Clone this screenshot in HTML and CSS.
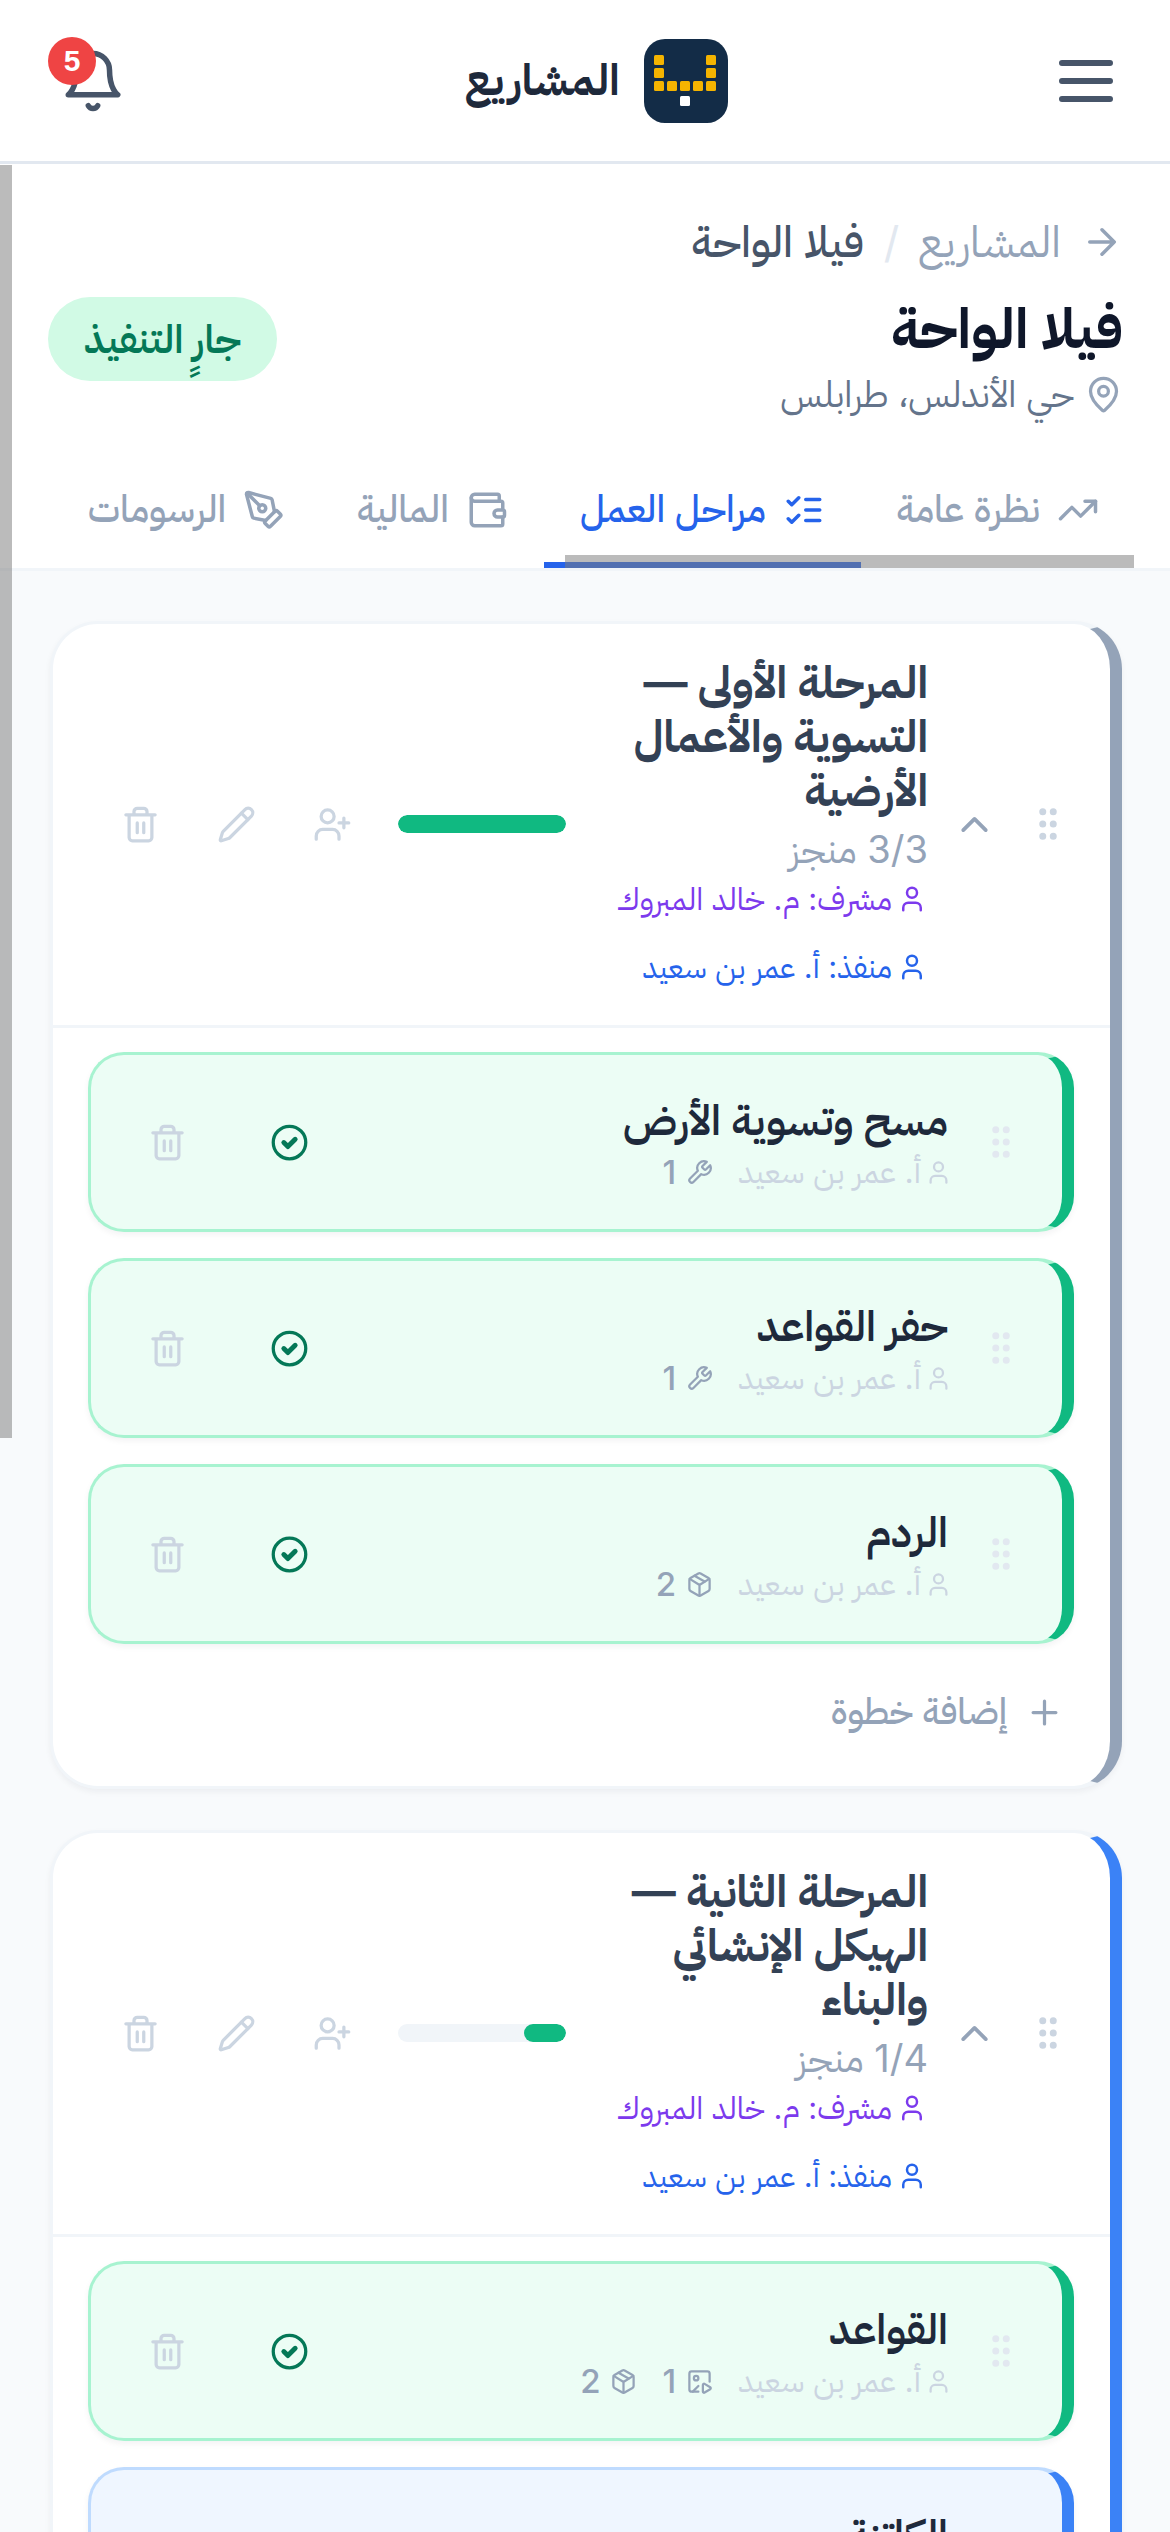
FILE: index.html
```html
<!DOCTYPE html>
<html lang="ar" dir="rtl">
<head>
    <meta charset="UTF-8">
    <title>فيلا الواحة</title>
    <link rel="stylesheet" href="styles.css">
</head>
<body>
<svg class="defs" xmlns="http://www.w3.org/2000/svg">
    <symbol id="i-menu" viewBox="0 0 24 24"><path d="M4 6h16M4 12h16M4 18h16"/></symbol>
    <symbol id="i-bell" viewBox="0 0 24 24"><path d="M6 8a6 6 0 0 1 12 0c0 7 3 9 3 9H3s3-2 3-9"/><path d="M10.3 21a1.94 1.94 0 0 0 3.4 0"/></symbol>
    <symbol id="i-arrow" viewBox="0 0 24 24"><path d="M5 12h14M12 5l7 7-7 7"/></symbol>
    <symbol id="i-pin" viewBox="0 0 24 24"><path d="M20 10c0 4.993-5.539 10.193-7.399 11.799a1 1 0 0 1-1.202 0C9.539 20.193 4 14.993 4 10a8 8 0 0 1 16 0"/><circle cx="12" cy="10" r="3"/></symbol>
    <symbol id="i-trend" viewBox="0 0 24 24"><path d="M22 7l-8.5 8.5-5-5L2 17"/><path d="M16 7h6v6"/></symbol>
    <symbol id="i-checks" viewBox="0 0 24 24"><path d="m3 17 2 2 4-4M3 7l2 2 4-4M13 6h8M13 12h8M13 18h8"/></symbol>
    <symbol id="i-wallet" viewBox="0 0 24 24"><path d="M19 7V4a1 1 0 0 0-1-1H5a2 2 0 0 0 0 4h15a1 1 0 0 1 1 1v4h-3a2 2 0 0 0 0 4h3a1 1 0 0 0 1-1v-2a1 1 0 0 0-1-1"/><path d="M3 5v14a2 2 0 0 0 2 2h15a1 1 0 0 0 1-1v-4"/></symbol>
    <symbol id="i-pen" viewBox="0 0 24 24"><path d="M15.707 21.293a1 1 0 0 1-1.414 0l-1.586-1.586a1 1 0 0 1 0-1.414l5.586-5.586a1 1 0 0 1 1.414 0l1.586 1.586a1 1 0 0 1 0 1.414z"/><path d="m18 13-1.375-6.874a1 1 0 0 0-.746-.776L3.235 2.028a1 1 0 0 0-1.207 1.207L5.35 15.879a1 1 0 0 0 .776.746L13 18"/><path d="m2.3 2.3 7.286 7.286"/><circle cx="11" cy="11" r="2"/></symbol>
    <symbol id="i-grip" viewBox="0 0 24 24"><circle cx="9" cy="5" r="1"/><circle cx="15" cy="5" r="1"/><circle cx="9" cy="12" r="1"/><circle cx="15" cy="12" r="1"/><circle cx="9" cy="19" r="1"/><circle cx="15" cy="19" r="1"/></symbol>
    <symbol id="i-chevron" viewBox="0 0 24 24"><path d="m18 15-6-6-6 6"/></symbol>
    <symbol id="i-userplus" viewBox="0 0 24 24"><path d="M16 21v-2a4 4 0 0 0-4-4H6a4 4 0 0 0-4 4v2"/><circle cx="9" cy="7" r="4"/><path d="M19 8v6M22 11h-6"/></symbol>
    <symbol id="i-pencil" viewBox="0 0 24 24"><path d="M21.174 6.812a1 1 0 0 0-3.986-3.987L3.842 16.174a2 2 0 0 0-.5.83l-1.321 4.352a.5.5 0 0 0 .623.622l4.353-1.32a2 2 0 0 0 .83-.497z"/><path d="m15 5 4 4"/></symbol>
    <symbol id="i-trash" viewBox="0 0 24 24"><path d="M3 6h18M19 6v14c0 1-1 2-2 2H7c-1 0-2-1-2-2V6M8 6V4c0-1 1-2 2-2h4c1 0 2 1 2 2v2M10 11v6M14 11v6"/></symbol>
    <symbol id="i-user" viewBox="0 0 24 24"><path d="M19 21v-2a4 4 0 0 0-4-4H9a4 4 0 0 0-4 4v2"/><circle cx="12" cy="7" r="4"/></symbol>
    <symbol id="i-wrench" viewBox="0 0 24 24"><path d="M14.7 6.3a1 1 0 0 0 0 1.4l1.6 1.6a1 1 0 0 0 1.4 0l3.77-3.77a6 6 0 0 1-7.94 7.94l-6.91 6.91a2.12 2.12 0 0 1-3-3l6.91-6.91a6 6 0 0 1 7.94-7.94l-3.76 3.76z"/></symbol>
    <symbol id="i-package" viewBox="0 0 24 24"><path d="M11 21.73a2 2 0 0 0 2 0l7-4A2 2 0 0 0 21 16V8a2 2 0 0 0-1-1.73l-7-4a2 2 0 0 0-2 0l-7 4A2 2 0 0 0 3 8v8a2 2 0 0 0 1 1.73z"/><path d="M12 22V12"/><path d="m3.3 7 7.703 4.734a2 2 0 0 0 1.994 0L20.7 7"/><path d="m7.5 4.27 9 5.15"/></symbol>
    <symbol id="i-media" viewBox="0 0 24 24"><path d="M15 15.003a1 1 0 0 1 1.517-.859l4.997 2.997a1 1 0 0 1 0 1.718l-4.997 2.997a1 1 0 0 1-1.517-.86z"/><path d="M21 12.17V5a2 2 0 0 0-2-2H5a2 2 0 0 0-2 2v14a2 2 0 0 0 2 2h6"/><path d="m6 21 5-5"/><circle cx="9" cy="9" r="2"/></symbol>
    <symbol id="i-done" viewBox="0 0 24 24"><circle cx="12" cy="12" r="10"/><path class="tick" d="m8.5 12 2.5 2.5 4.5-4.5"/></symbol>
    <symbol id="i-plus" viewBox="0 0 24 24"><path d="M5 12h14M12 5v14"/></symbol>
</svg>

<header class="topbar">
    <button class="icon-btn menu-btn"><svg class="icon"><use href="#i-menu"/></svg></button>
    <div class="brand">
        <svg class="logo" viewBox="0 0 84 84">
            <rect width="84" height="84" rx="21" fill="#132c47"/>
            <g fill="#f5b400">
                <rect x="10" y="16" width="10" height="10" rx="1.5"/><rect x="62" y="16" width="10" height="10" rx="1.5"/>
                <rect x="10" y="29" width="10" height="10" rx="1.5"/><rect x="62" y="29" width="10" height="10" rx="1.5"/>
                <rect x="10" y="42" width="10" height="10" rx="1.5"/><rect x="23" y="42" width="10" height="10" rx="1.5"/>
                <rect x="36" y="42" width="10" height="10" rx="1.5"/><rect x="49" y="42" width="10" height="10" rx="1.5"/>
                <rect x="62" y="42" width="10" height="10" rx="1.5"/>
            </g>
            <rect x="36" y="57" width="10" height="10" rx="1.5" fill="#fff"/>
        </svg>
        <span class="brand-name">المشاريع</span>
    </div>
    <button class="icon-btn bell-btn"><svg class="icon"><use href="#i-bell"/></svg><span class="badge">5</span></button>
</header>

<section class="project-head">
    <div class="crumbs">
        <svg class="icon crumb-arrow"><use href="#i-arrow"/></svg>
        <span class="crumb-link">المشاريع</span>
        <span class="crumb-sep">/</span>
        <span class="crumb-current">فيلا الواحة</span>
    </div>
    <div class="title-row">
        <div>
            <h1>فيلا الواحة</h1>
            <p class="location"><svg class="icon pin"><use href="#i-pin"/></svg>حي الأندلس، طرابلس</p>
        </div>
        <span class="status">جارٍ التنفيذ</span>
    </div>
    <nav class="tabs">
        <a class="tab"><svg class="icon"><use href="#i-trend"/></svg>نظرة عامة</a>
        <a class="tab active"><svg class="icon"><use href="#i-checks"/></svg>مراحل العمل</a>
        <a class="tab"><svg class="icon"><use href="#i-wallet"/></svg>المالية</a>
        <a class="tab"><svg class="icon"><use href="#i-pen"/></svg>الرسومات</a>
        <div class="scroll-x"></div>
    </nav>
</section>

<main class="phases">
    <div class="scroll-y"></div>

    <article class="phase phase-done">
        <div class="phase-head">
            <svg class="icon grip"><use href="#i-grip"/></svg>
            <svg class="icon chevron"><use href="#i-chevron"/></svg>
            <div class="phase-info">
                <h2>المرحلة الأولى — التسوية والأعمال الأرضية</h2>
                <p class="count">3/3 منجز</p>
                <p class="role role-super"><svg class="icon"><use href="#i-user"/></svg>مشرف: م. خالد المبروك</p>
                <p class="role role-exec"><svg class="icon"><use href="#i-user"/></svg>منفذ: أ. عمر بن سعيد</p>
            </div>
            <div class="bar"><div class="bar-fill" style="width:100%"></div></div>
            <div class="actions">
                <svg class="icon"><use href="#i-userplus"/></svg>
                <svg class="icon"><use href="#i-pencil"/></svg>
                <svg class="icon"><use href="#i-trash"/></svg>
            </div>
        </div>
        <div class="steps">
            <div class="step step-done">
                <svg class="icon grip"><use href="#i-grip"/></svg>
                <div class="step-info">
                    <h3>مسح وتسوية الأرض</h3>
                    <div class="step-meta">
                        <span class="person"><svg class="icon"><use href="#i-user"/></svg>أ. عمر بن سعيد</span>
                        <span class="attach"><svg class="icon"><use href="#i-wrench"/></svg>1</span>
                    </div>
                </div>
                <svg class="icon done"><use href="#i-done"/></svg>
                <svg class="icon step-trash"><use href="#i-trash"/></svg>
            </div>
            <div class="step step-done">
                <svg class="icon grip"><use href="#i-grip"/></svg>
                <div class="step-info">
                    <h3>حفر القواعد</h3>
                    <div class="step-meta">
                        <span class="person"><svg class="icon"><use href="#i-user"/></svg>أ. عمر بن سعيد</span>
                        <span class="attach"><svg class="icon"><use href="#i-wrench"/></svg>1</span>
                    </div>
                </div>
                <svg class="icon done"><use href="#i-done"/></svg>
                <svg class="icon step-trash"><use href="#i-trash"/></svg>
            </div>
            <div class="step step-done">
                <svg class="icon grip"><use href="#i-grip"/></svg>
                <div class="step-info">
                    <h3>الردم</h3>
                    <div class="step-meta">
                        <span class="person"><svg class="icon"><use href="#i-user"/></svg>أ. عمر بن سعيد</span>
                        <span class="attach"><svg class="icon"><use href="#i-package"/></svg>2</span>
                    </div>
                </div>
                <svg class="icon done"><use href="#i-done"/></svg>
                <svg class="icon step-trash"><use href="#i-trash"/></svg>
            </div>
            <a class="add-step"><svg class="icon"><use href="#i-plus"/></svg>إضافة خطوة</a>
        </div>
    </article>

    <article class="phase phase-active">
        <div class="phase-head">
            <svg class="icon grip"><use href="#i-grip"/></svg>
            <svg class="icon chevron"><use href="#i-chevron"/></svg>
            <div class="phase-info">
                <h2>المرحلة الثانية — الهيكل الإنشائي والبناء</h2>
                <p class="count">1/4 منجز</p>
                <p class="role role-super"><svg class="icon"><use href="#i-user"/></svg>مشرف: م. خالد المبروك</p>
                <p class="role role-exec"><svg class="icon"><use href="#i-user"/></svg>منفذ: أ. عمر بن سعيد</p>
            </div>
            <div class="bar"><div class="bar-fill" style="width:25%"></div></div>
            <div class="actions">
                <svg class="icon"><use href="#i-userplus"/></svg>
                <svg class="icon"><use href="#i-pencil"/></svg>
                <svg class="icon"><use href="#i-trash"/></svg>
            </div>
        </div>
        <div class="steps">
            <div class="step step-done">
                <svg class="icon grip"><use href="#i-grip"/></svg>
                <div class="step-info">
                    <h3>القواعد</h3>
                    <div class="step-meta">
                        <span class="person"><svg class="icon"><use href="#i-user"/></svg>أ. عمر بن سعيد</span>
                        <span class="attach"><svg class="icon"><use href="#i-media"/></svg>1</span>
                        <span class="attach"><svg class="icon"><use href="#i-package"/></svg>2</span>
                    </div>
                </div>
                <svg class="icon done"><use href="#i-done"/></svg>
                <svg class="icon step-trash"><use href="#i-trash"/></svg>
            </div>
            <div class="step step-active">
                <svg class="icon grip"><use href="#i-grip"/></svg>
                <div class="step-info">
                    <h3>الكاتنة</h3>
                    <div class="step-meta">
                        <span class="person"><svg class="icon"><use href="#i-user"/></svg>أ. عمر بن سعيد</span>
                    </div>
                </div>
                <svg class="icon step-trash"><use href="#i-trash"/></svg>
            </div>
        </div>
    </article>
</main>
</body>
</html>
```

FILE: styles.css
```css
* {
    box-sizing: border-box;
}
html, body {
    margin: 0;
    height: 2532px;
    overflow: hidden;
}
body {
    font-family: Inter, "IBM Plex Sans Arabic", sans-serif;
    background: #f8fafc;
    color: #1e293b;
}
h1, h2, h3, p {
    margin: 0;
}
.defs {
    position: absolute;
    width: 0;
    height: 0;
}
.icon {
    display: block;
    flex: none;
    width: 42px;
    height: 42px;
    fill: none;
    stroke: currentColor;
    stroke-width: 2;
    stroke-linecap: round;
    stroke-linejoin: round;
}
.icon-btn {
    position: relative;
    padding: 0;
    border: 0;
    background: none;
    color: #475569;
}

/* top bar */
.topbar {
    display: flex;
    align-items: center;
    justify-content: space-between;
    height: 164px;
    padding: 0 48px 0 60px;
    background: #fff;
    border-bottom: 3px solid #e2e8f0;
}
.menu-btn .icon {
    width: 72px;
    height: 72px;
}
.bell-btn .icon {
    width: 66px;
    height: 66px;
}
.badge {
    position: absolute;
    top: -11px;
    left: -12px;
    width: 48px;
    height: 48px;
    border-radius: 50%;
    background: #ef4444;
    color: #fff;
    font-size: 30px;
    font-weight: 700;
    line-height: 48px;
    text-align: center;
}
.brand {
    display: flex;
    align-items: center;
    gap: 24px;
    margin-right: -16px;
}
.logo {
    display: block;
    width: 84px;
    height: 84px;
}
.brand-name {
    font-size: 43px;
    font-weight: 700;
}

/* project head */
.project-head {
    background: #fff;
    padding-top: 54px;
}
.crumbs {
    display: flex;
    align-items: center;
    gap: 20px;
    padding: 0 47px;
    height: 48px;
    font-size: 43px;
    color: #94a3b8;
}
.crumb-sep {
    color: #e2e8f0;
}
.crumb-current {
    color: #475569;
    font-weight: 500;
}
.title-row {
    display: flex;
    align-items: flex-start;
    justify-content: space-between;
    padding: 0 47px 0 48px;
    margin-top: 26px;
}
h1 {
    font-size: 56px;
    font-weight: 700;
    color: #0f172a;
    line-height: 72px;
}
.location {
    display: flex;
    align-items: center;
    gap: 10px;
    margin-top: 3px;
    font-size: 36px;
    color: #64748b;
    line-height: 54px;
}
.pin {
    width: 39px;
    height: 39px;
    color: #94a3b8;
}
.status {
    display: block;
    margin-top: 5px;
    padding: 0 36px;
    height: 84px;
    line-height: 84px;
    border-radius: 42px;
    background: #d1fae5;
    color: #047857;
    font-size: 39px;
    font-weight: 600;
}
.tabs {
    position: relative;
    display: flex;
    margin-top: 42px;
    padding-right: 35px;
    border-bottom: 3px solid #f1f5f9;
}
.tab {
    display: flex;
    align-items: center;
    gap: 17px;
    height: 105px;
    padding: 0 36px 6px;
    border-bottom: 6px solid transparent;
    font-size: 37.5px;
    font-weight: 500;
    color: #94a3b8;
    white-space: nowrap;
}
.tab.active {
    color: #2563eb;
    border-bottom-color: #2563eb;
}
/* browser scroll thumbs caught in the shot */
.scroll-x {
    position: absolute;
    left: 565px;
    bottom: 0;
    width: 569px;
    height: 13px;
    background: rgba(125, 125, 125, 0.52);
}
.scroll-y {
    position: absolute;
    left: 0;
    top: 165px;
    width: 12px;
    height: 1273px;
    background: rgba(125, 125, 125, 0.52);
}

/* phases */
.phases {
    padding: 50px 48px 0 50px;
}
.phase {
    background: #fff;
    border: 3px solid #f1f5f9;
    border-right-width: 12px;
    border-radius: 48px;
    box-shadow: 0 3px 6px rgba(15, 23, 42, 0.05);
    margin-bottom: 41px;
}
.phase-done {
    border-right-color: #94a3b8;
}
.phase-active {
    border-right-color: #3b82f6;
}
.phase-head {
    display: flex;
    align-items: center;
    padding: 36px 41px 37px 68px;
    border-bottom: 3px solid #f1f5f9;
}
.grip {
    color: #cbd5e1;
}
.chevron {
    width: 45px;
    height: 45px;
    margin: 0 30px;
    color: #94a3b8;
}
.phase-info {
    flex: 1;
    min-width: 0;
    margin: -5px -6px 4px 0;
}
h2 {
    font-size: 44px;
    font-weight: 700;
    line-height: 54px;
    color: #334155;
}
.count {
    height: 48px;
    margin-top: 8px;
    font-size: 38px;
    line-height: 48px;
    color: #94a3b8;
}
.role {
    display: flex;
    align-items: center;
    gap: 5px;
    height: 34px;
    margin-right: 1px;
    font-size: 31px;
    white-space: nowrap;
}
.role .icon {
    width: 30px;
    height: 30px;
}
.role-super {
    margin-top: 9px;
    color: #7c3aed;
}
.role-exec {
    margin-top: 34px;
    color: #2563eb;
}
.bar {
    flex: none;
    width: 168px;
    height: 18px;
    margin: 0 38px 0 46px;
    border-radius: 9px;
    background: #f1f5f9;
    overflow: hidden;
}
.bar-fill {
    height: 100%;
    border-radius: 9px;
    background: #10b981;
}
.actions {
    display: flex;
    flex: none;
    gap: 57px;
    color: #cbd5e1;
}
.actions .icon, .step-trash, .done {
    width: 39px;
    height: 39px;
}

/* steps */
.steps {
    display: flex;
    flex-direction: column;
    gap: 26px;
    padding: 24px 36px 0 35px;
}
.step {
    display: flex;
    align-items: center;
    flex: none;
    height: 180px;
    padding: 0 40px 0 57px;
    border: 3px solid;
    border-right-width: 12px;
    border-radius: 36px;
    box-shadow: 0 3px 6px rgba(15, 23, 42, 0.05);
}
.step-done {
    background: #ecfdf5;
    border-color: #a7f3d0;
    border-right-color: #10b981;
}
.step-active {
    background: #eff6ff;
    border-color: #bfdbfe;
    border-right-color: #3b82f6;
}
.step .grip {
    color: #e2e8f0;
}
.step-info {
    flex: 1;
    margin-right: 32px;
}
h3 {
    font-size: 42px;
    font-weight: 600;
    line-height: 60px;
    color: #1e293b;
}
.step-meta {
    display: flex;
    align-items: center;
    gap: 25px;
    height: 45px;
    font-size: 33px;
}
.person {
    display: flex;
    align-items: center;
    gap: 4px;
    margin-right: -4px;
    font-size: 32px;
    color: #cbd5e1;
}
.attach {
    display: flex;
    align-items: center;
    gap: 10px;
    color: #94a3b8;
    font-weight: 500;
}
.step-meta .icon {
    width: 27px;
    height: 27px;
}
.done {
    margin-left: 83px;
    color: #047857;
}
.tick {
    stroke-width: 3;
}
.step-trash {
    color: #cbd5e1;
}
.add-step {
    display: flex;
    align-items: center;
    gap: 18px;
    height: 84px;
    padding-right: 10px;
    font-size: 36px;
    font-weight: 500;
    color: #94a3b8;
    margin-bottom: 32px;
}
.add-step .icon {
    width: 39px;
    height: 39px;
}
```
